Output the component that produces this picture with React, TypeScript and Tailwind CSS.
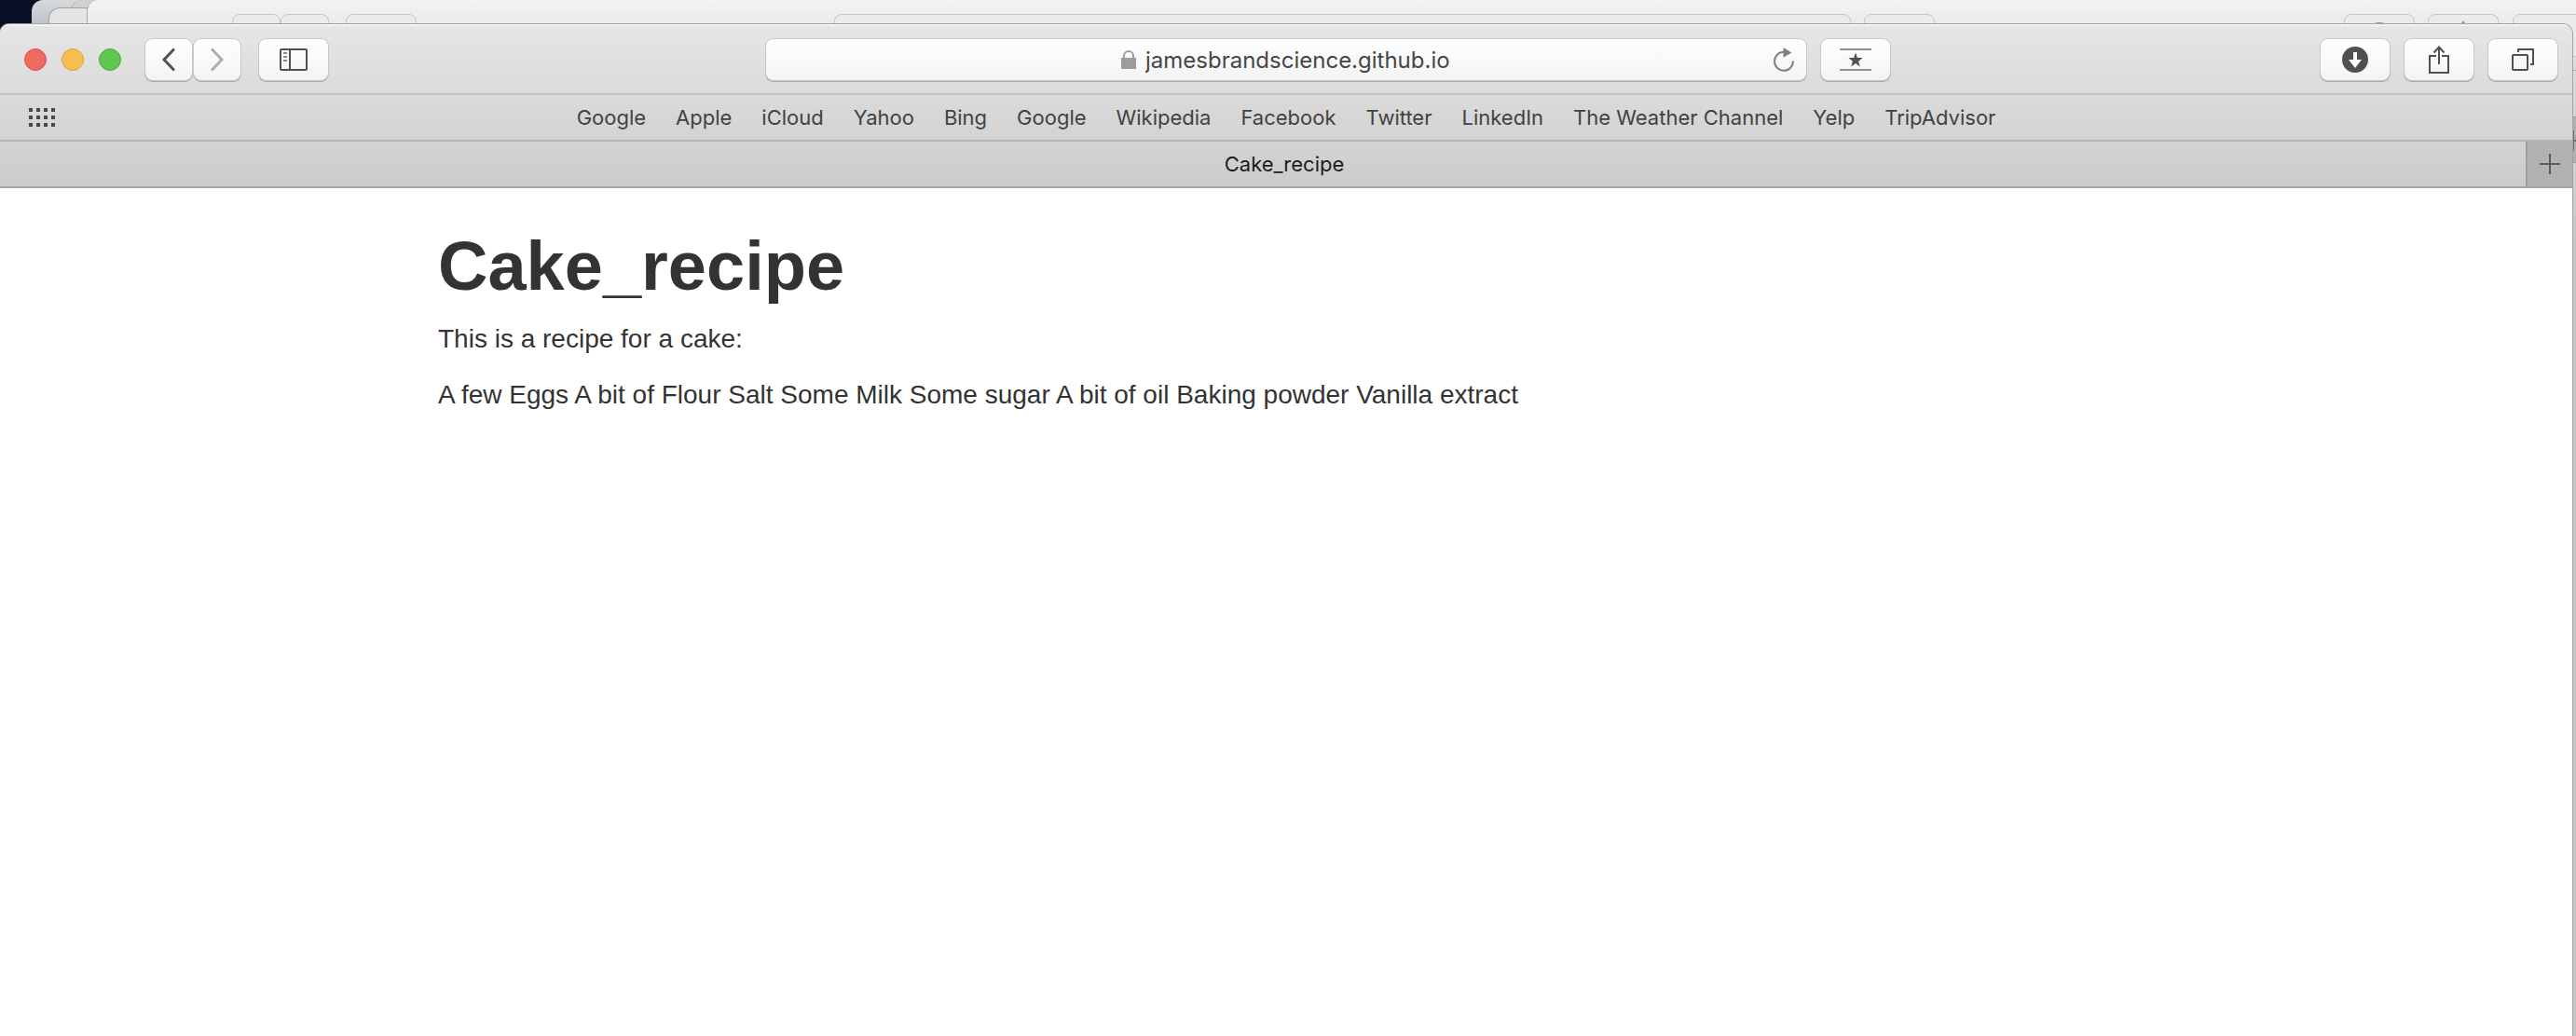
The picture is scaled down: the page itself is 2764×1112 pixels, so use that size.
import React from "react";

const bookmarks = [
  "Google", "Apple", "iCloud", "Yahoo", "Bing", "Google", "Wikipedia", "Facebook",
  "Twitter", "LinkedIn", "The Weather Channel", "Yelp", "TripAdvisor",
];

function ToolButton({ label, children, className = "w-[74px]" }: { label: string; children: React.ReactNode; className?: string }) {
  return (
    <button
      type="button"
      aria-label={label}
      className={`flex h-11 shrink-0 items-center justify-center rounded-lg bg-linear-to-b from-white to-[#f3f3f3] shadow-[0_0_0_1px_#c8c8c8,0_1px_0_1px_#a9a9a9] ${className}`}
    >
      {children}
    </button>
  );
}

function Ghost({ className, children }: { className: string; children?: React.ReactNode }) {
  return (
    <div className={`absolute top-[15px] flex h-[46px] justify-center rounded-lg border border-[#c6c6c6] bg-[#ebebeb] ${className}`}>
      {children}
    </div>
  );
}

function BackgroundWindows() {
  return (
    <div aria-hidden="true" className="absolute inset-0 overflow-hidden bg-[#0b1026]">
      <div className="absolute inset-y-0 right-0 left-[34px] rounded-tl-xl bg-linear-to-b from-[#d6d9dc] from-0% to-[#bfc3c7] to-[26px]" />
      <div className="absolute inset-y-0 right-0 left-[76px] rounded-tl-xl border-l border-[#a9a9a9] bg-[#d2d2d2]" />
      <div className="absolute top-2 right-0 bottom-0 left-[52px] rounded-tl-xl border-t border-l border-[#a0a0a0] bg-[#e4e4e4]" />
      <div className="absolute inset-y-0 right-0 left-[93px] rounded-tl-xl border-l border-[#a6a6a6] bg-linear-to-b from-[#f3f3f3] from-0% via-[#dedede] via-[60px] to-[#c8c8c8] to-[260px]">
        <Ghost className="left-[155px] w-[52px]" />
        <Ghost className="left-[207px] w-[52px]" />
        <Ghost className="left-[277px] w-[76px]" />
        <Ghost className="left-[801px] right-[778px]" />
        <Ghost className="right-[688px] w-[76px]" />
        <Ghost className="right-[173px] w-[76px]">
          <svg width="28" height="28" viewBox="0 0 28 28" className="mt-2"><circle cx="14" cy="14" r="14" fill="#8c8c8c" /></svg>
        </Ghost>
        <Ghost className="right-[83px] w-[76px]">
          <svg width="12" height="8" viewBox="0 0 12 8" className="mt-1.5"><path d="m6 0 6 8H0z" fill="#a0a0a0" /></svg>
        </Ghost>
        <Ghost className="-right-2 w-[76px]" />
        <div className="absolute top-[75px] right-0 h-px w-full bg-[#b4b4b4]" />
        <div className="absolute top-[125px] right-0 h-[50px] w-[50px] border-y border-[#a0a0a0] bg-[#b0b0b0]">
          <svg width="50" height="48" viewBox="0 0 50 48" stroke="#707070" strokeWidth="2"><path d="M47 14v22M36 25h14" /></svg>
        </div>
      </div>
    </div>
  );
}

export default function App() {
  return (
    <div className="relative flex min-h-screen flex-col pt-[26px] pr-1 font-['Inter',sans-serif]">
      <BackgroundWindows />
      <div className="relative flex grow flex-col overflow-hidden rounded-t-[10px] bg-white shadow-[0_0_0_1px_#a3a3a3]">
        <header className="bg-linear-to-b from-[#e6e6e6] to-[#cbcbcb] shadow-[inset_0_2px_0_#f4f4f4]">
          <div className="grid h-[76px] grid-cols-[1fr_1116px_1fr] items-center border-b-2 border-[#c2c2c2] pt-0.5">
            <div className="flex items-center pl-[26px]">
              <div className="flex gap-4">
                <button type="button" aria-label="Close" className="size-6 rounded-full border border-[#dc4f46] bg-[#ee6a5f]" />
                <button type="button" aria-label="Minimize" className="size-6 rounded-full border border-[#dfa23b] bg-[#f6be50]" />
                <button type="button" aria-label="Zoom" className="size-6 rounded-full border border-[#4cab3c] bg-[#62c655]" />
              </div>
              <div className="ml-[26px] flex gap-0.5">
                <ToolButton label="Back" className="w-[50px]">
                  <svg width="14" height="26" viewBox="0 0 14 26" fill="none" stroke="#505050" strokeWidth="3"><path d="M13 1.5 2 13l11 11.5" /></svg>
                </ToolButton>
                <ToolButton label="Forward" className="w-[50px]">
                  <svg width="14" height="26" viewBox="0 0 14 26" fill="none" stroke="#adadad" strokeWidth="3"><path d="M1 1.5 12 13 1 24.5" /></svg>
                </ToolButton>
              </div>
              <div className="ml-5">
                <ToolButton label="Show sidebar">
                  <svg width="30" height="24" viewBox="0 0 30 24" fill="none" stroke="#505050" strokeWidth="2">
                    <rect x="1" y="1" width="28" height="22" rx="1" />
                    <path d="M11 1v22" />
                    <path d="M4 5h4M4 9h4M4 13h4" stroke="#8a8a8a" />
                  </svg>
                </ToolButton>
              </div>
            </div>
            <div className="relative flex h-11 items-center justify-center rounded-lg bg-linear-to-b from-white to-[#f3f3f3] shadow-[0_0_0_1px_#c8c8c8,0_1px_0_1px_#a9a9a9]">
              <svg width="16" height="20" viewBox="0 0 16 20" className="mr-2.5 shrink-0">
                <path d="M3 9V6a5 5 0 0 1 10 0v3" fill="none" stroke="#9c9c9c" strokeWidth="2" />
                <path d="M0 8h16v12H0z" fill="#9c9c9c" />
              </svg>
              <input aria-label="Address" defaultValue="jamesbrandscience.github.io" className="w-[328px] bg-transparent pt-0.5 text-[24px] leading-8 text-[#464646] outline-none" />
              <button type="button" aria-label="Reload" className="absolute right-[13px]">
                <svg width="22" height="26" viewBox="0 0 22 26" className="block">
                  <path d="M11 4.800A10 10 0 1 0 21 14.500" fill="none" stroke="#808080" strokeWidth="2" />
                  <path d="M10.500 0v10.800l8.800-5.400z" fill="#808080" />
                </svg>
              </button>
            </div>
            <div className="flex justify-between pr-4 pl-4">
              <ToolButton label="Bookmarks">
                <svg width="34" height="24" viewBox="0 0 34 24">
                  <path d="M0 1h34M0 23h34" stroke="#909090" strokeWidth="2" />
                  <path d="m17 4.500 1.900 5.600h5.800l-4.600 3.600 1.700 5.800-4.800-3.500-4.800 3.500 1.700-5.800-4.600-3.600h5.800z" fill="#505050" />
                </svg>
              </ToolButton>
              <div className="flex gap-4">
                <ToolButton label="Downloads">
                  <svg width="28" height="28" viewBox="0 0 28 28"><circle cx="14" cy="14" r="14" fill="#505050" /><path d="M12 6h4v8h5l-7 9-7-9h5z" fill="#fff" /></svg>
                </ToolButton>
                <ToolButton label="Share">
                  <svg width="22" height="30" viewBox="0 0 22 30" fill="none" stroke="#505050" strokeWidth="2"><path d="M8 11H1v18h20V11h-7M11 20V1M5.500 7.500 11 1.500l5.500 6" /></svg>
                </ToolButton>
                <ToolButton label="Tab overview">
                  <svg width="24" height="24" viewBox="0 0 24 24" fill="none" stroke="#505050" strokeWidth="2"><rect x="1" y="7" width="16" height="16" rx="1" /><path d="M7 4V1h16v16h-3" /></svg>
                </ToolButton>
              </div>
            </div>
          </div>
          <nav aria-label="Favorites" className="relative flex h-[50px] items-center justify-center border-b-2 border-[#b3b3b3]">
            <button type="button" aria-label="Top sites" className="absolute left-[31px]">
              <svg width="28" height="20" viewBox="0 0 28 20" stroke="#484848" strokeWidth="4" strokeDasharray="4 4" className="block"><path d="M0 2h28M0 10h28M0 18h28" /></svg>
            </button>
            <ul className="flex gap-8 text-[22px] leading-7 text-[#424242]">
              {bookmarks.map((b, i) => (
                <li key={i}><a href="#">{b}</a></li>
              ))}
            </ul>
          </nav>
          <div className="flex h-[50px] items-stretch border-b-2 border-[#a6a6a6]">
            <button type="button" className="grow pl-[46px] text-[22px] leading-7 text-[#1c1c1c]">Cake_recipe</button>
            <button type="button" aria-label="New tab" className="flex w-[50px] items-center justify-center border-l-2 border-[#a0a0a0] bg-[#b2b2b2]">
              <svg width="22" height="22" viewBox="0 0 22 22" stroke="#5c5c5c" strokeWidth="2"><path d="M11 0v22M0 11h22" /></svg>
            </button>
          </div>
        </header>
        <main className="mx-auto w-full max-w-[1820px] pt-11 font-['Liberation_Sans',sans-serif] text-[28px] leading-10 text-[#333]">
          <h1 className="text-[74px] leading-[80px] font-bold">Cake_recipe</h1>
          <p className="mt-[18px]">This is a recipe for a cake:</p>
          <p className="mt-5">A few Eggs A bit of Flour Salt Some Milk Some sugar A bit of oil Baking powder Vanilla extract</p>
        </main>
      </div>
    </div>
  );
}
